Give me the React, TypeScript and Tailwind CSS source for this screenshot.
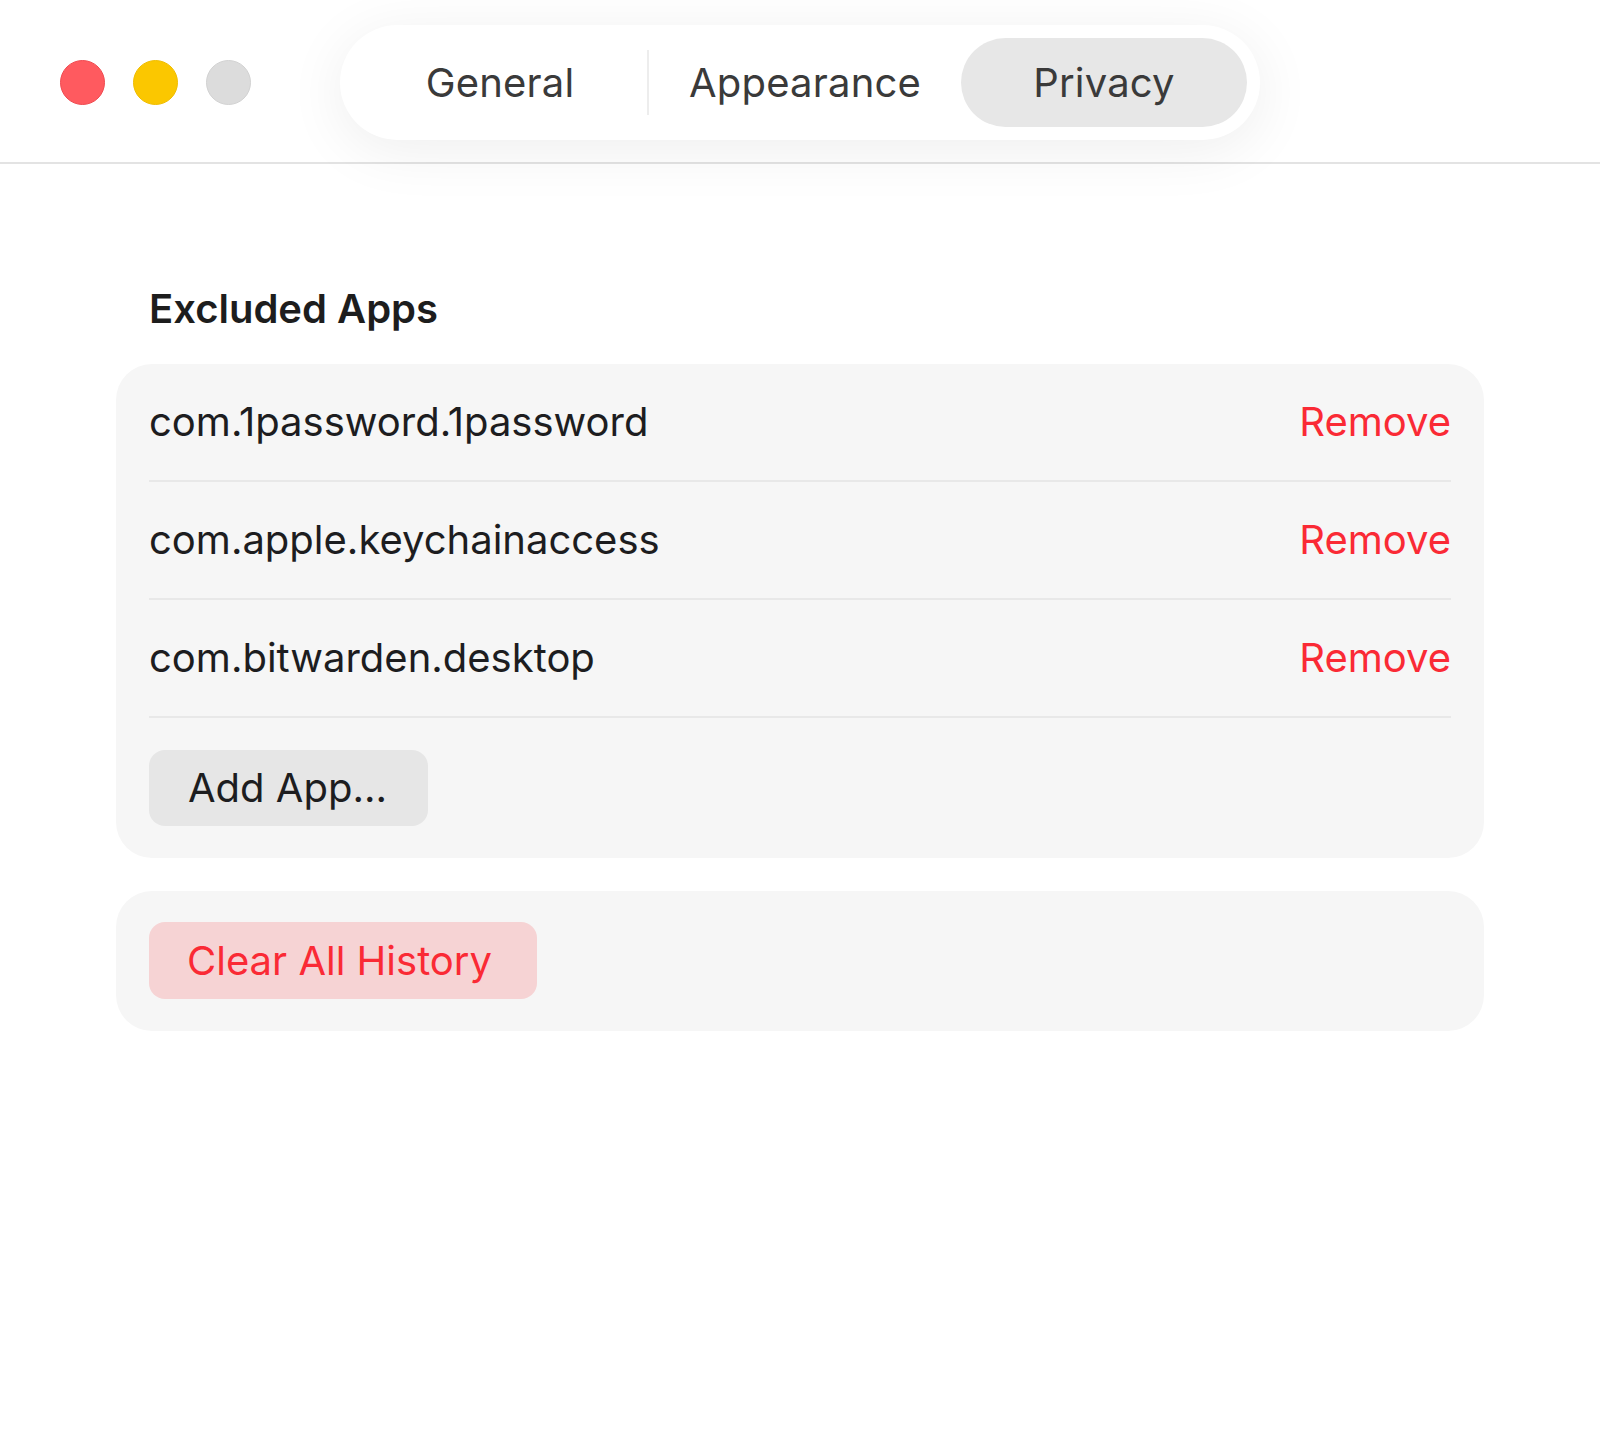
import React from "react";

const apps = ["com.1password.1password", "com.apple.keychainaccess", "com.bitwarden.desktop"];

export default function App() {
  return (
    <div
      className="w-[1600px] h-[1446px] bg-white overflow-hidden"
      style={{ fontFamily: "Inter, 'Noto Sans', 'Liberation Sans', sans-serif" }}
    >
      {/* Header */}
      <div className="h-[164px] border-b-2 border-[#e3e3e3] flex items-start">
        <div className="flex gap-[28px] ml-[60px] mt-[60px]">
          <div className="w-[45px] h-[45px] rounded-full bg-[#ff5a5f] border border-[#f04a50]" />
          <div className="w-[45px] h-[45px] rounded-full bg-[#fbc700] border border-[#f0bd00]" />
          <div className="w-[45px] h-[45px] rounded-full bg-[#dcdcdc] border border-[#d2d2d2]" />
        </div>
        <div className="ml-[89px] mt-[25px] w-[920px] h-[115px] rounded-full bg-white shadow-[0_10px_60px_rgba(0,0,0,0.07)] flex items-center px-[13px] relative z-10">
          <div className="w-[294px] h-[89px] flex items-center justify-center text-[40px] text-[#3a3a3a] tracking-[0.2px]">
            General
          </div>
          <div className="w-[2px] h-[65px] bg-[#ededed]" />
          <div className="w-[312px] h-[89px] flex items-center justify-center text-[40px] text-[#3a3a3a] tracking-[0.2px]">
            Appearance
          </div>
          <div className="w-[286px] h-[89px] rounded-full bg-[#e7e7e7] flex items-center justify-center text-[40px] text-[#3a3a3a] tracking-[0.2px]">
            Privacy
          </div>
        </div>
      </div>

      {/* Content */}
      <div className="px-[116px]">
        <div className="mt-[121px] pl-[33px] text-[40px] leading-[48px] font-semibold text-[#1d1d1d]">
          Excluded Apps
        </div>

        <div className="mt-[31px] bg-[#f6f6f6] rounded-[36px] px-[33px] pb-[32px]">
          {apps.map((a) => (
            <div
              key={a}
              className="h-[118px] border-b-2 border-[#e8e8e8] flex items-center justify-between text-[40px] leading-[48px]"
            >
              <span className="text-[#1d1d1f]">{a}</span>
              <span className="text-[#fa2a35]">Remove</span>
            </div>
          ))}
          <div className="mt-[32px]">
            <button className="h-[76px] w-[279px] rounded-[16px] bg-[#e6e6e6] text-[40px] leading-[48px] text-[#1d1d1f] text-left pl-[39px]">
              Add App...
            </button>
          </div>
        </div>

        <div className="mt-[33px] bg-[#f6f6f6] rounded-[36px] px-[33px] pt-[31px] pb-[32px]">
          <button className="h-[77px] w-[388px] rounded-[16px] bg-[#f6d3d4] text-[40px] leading-[48px] text-[#fa2a35] text-left pl-[38px]">
            Clear All History
          </button>
        </div>
      </div>
    </div>
  );
}
